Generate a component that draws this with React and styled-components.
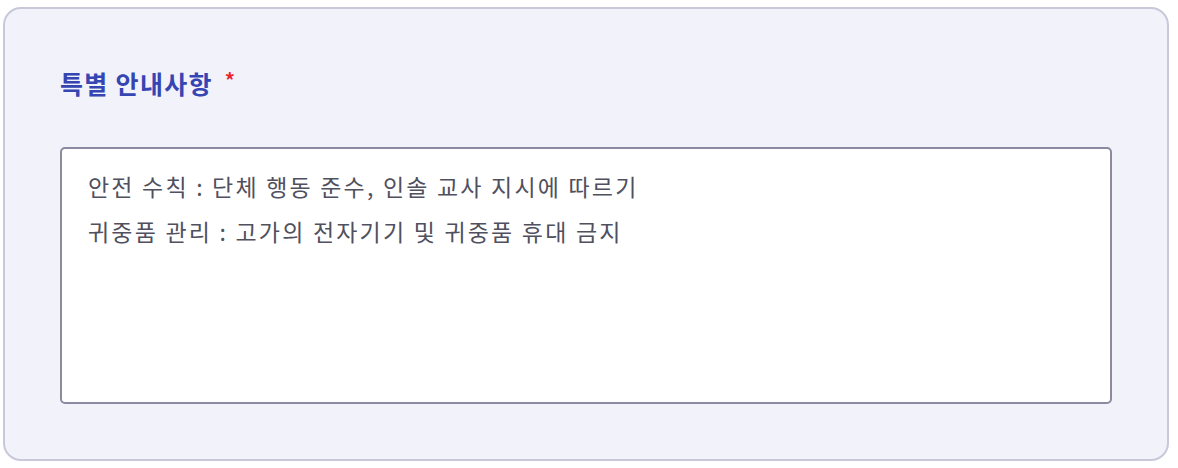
import styled, { createGlobalStyle } from "styled-components";

const GlobalStyle = createGlobalStyle`
  body {
    margin: 0;
    background: #ffffff;
    font-family: "Noto Sans CJK KR", "Noto Sans", sans-serif;
  }
`;

const notice = "안전 수칙 : 단체 행동 준수, 인솔 교사 지시에 따르기\n귀중품 관리 : 고가의 전자기기 및 귀중품 휴대 금지";

const App = () => {
  return (
    <Page>
      <GlobalStyle />
      <Card>
        <Label>
          특별 안내사항<Required>*</Required>
        </Label>
        <NoticeArea defaultValue={notice} readOnly />
      </Card>
    </Page>
  );
};

const Page = styled.div`
  padding: 7px 9px 7px 3px;
`;

const Card = styled.section`
  box-sizing: border-box;
  width: 1166px;
  height: 454px;
  border: 2px solid #c8c8da;
  border-radius: 18px;
  background: #f2f2fb;
  padding: 55px 55px 55px 55px;
  display: flex;
  flex-direction: column;
  gap: 45px;
`;

const Label = styled.div`
  font-size: 25px;
  font-weight: 700;
  line-height: 38px;
  color: #3545b2;
  letter-spacing: 1.3px;
  display: flex;
  align-items: center;
`;

const Required = styled.span`
  color: #e8262c;
  margin-left: 12px;
  font-size: 20px;
  line-height: 1;
  margin-top: -6px;
`;

const NoticeArea = styled.textarea`
  box-sizing: border-box;
  width: 1052px;
  flex: 1;
  resize: none;
  border: 2px solid #8a8aa0;
  border-radius: 5px;
  background: #ffffff;
  padding: 15px 26px;
  font-family: "Noto Sans CJK KR", "Noto Sans", sans-serif;
  font-size: 23px;
  line-height: 45px;
  letter-spacing: 2.2px;
  color: #50505e;
  outline: none;
`;

export default App;
